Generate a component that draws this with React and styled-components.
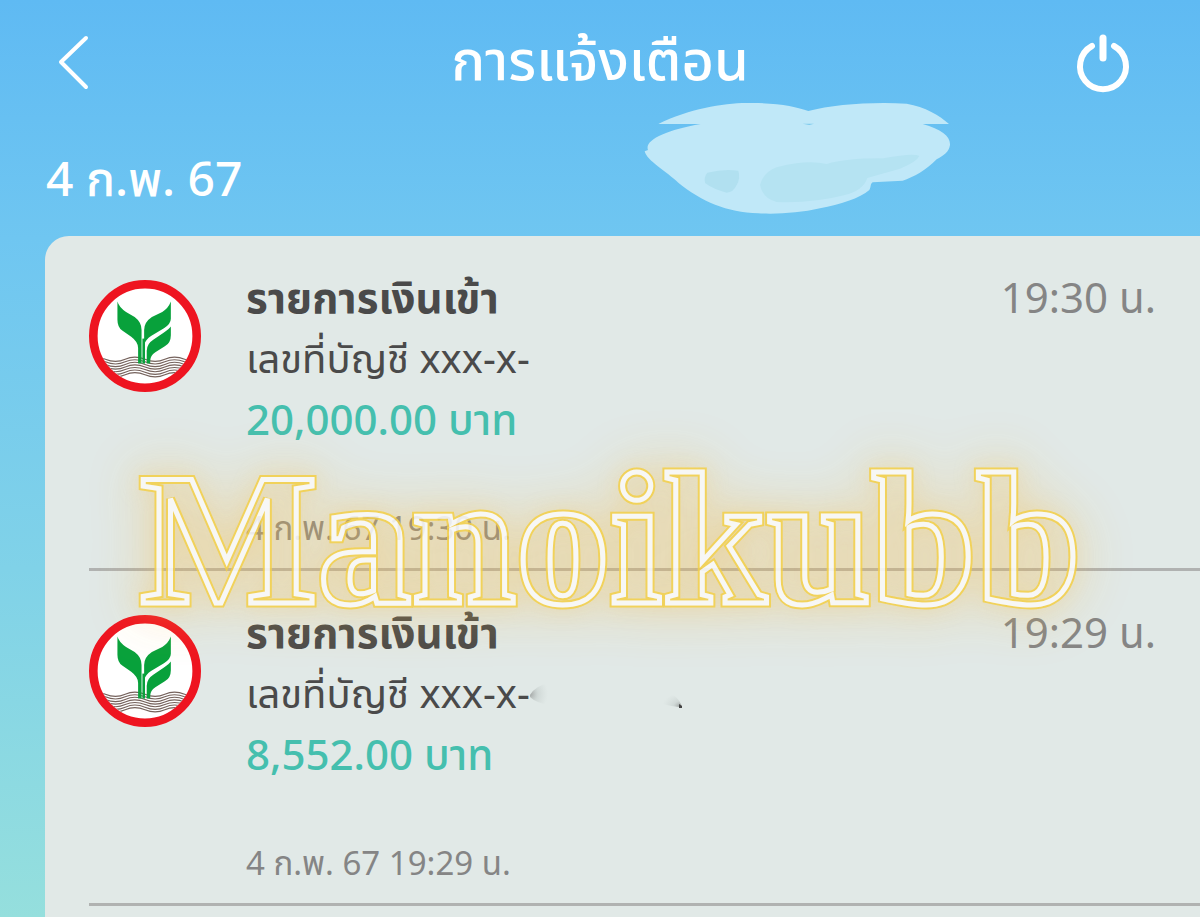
import React from "react";
import styled, { createGlobalStyle } from "styled-components";

const GlobalStyle = createGlobalStyle`
  * {
    box-sizing: border-box;
  }

  body {
    margin: 0;
    font-family: "Noto Sans", "Noto Sans Thai", sans-serif;
  }

  h1, h2, h3, p, ul {
    margin: 0;
    padding: 0;
    font-weight: 400;
  }
`;

const Page = styled.div`
  position: relative;
  display: flex;
  flex-direction: column;
  min-height: 100vh;
  overflow: hidden;
  background: linear-gradient(#5fbaf3, #6fc6f1 26%, #80d2e8 62%, #95dfdd);
`;

const Cloud = styled.svg`
  position: absolute;
  top: 90px;
  left: 630px;
  width: 340px;
  height: 135px;
`;

const Header = styled.header`
  position: relative;
  display: grid;
  grid-template-columns: 1fr auto 1fr;
  align-items: center;
  height: 126px;
  padding: 0 54px;
`;

const Title = styled.h1`
  padding-bottom: 10px;
  color: #fff;
  font-size: 56px;
  font-weight: 500;
  line-height: 80px;
`;

const IconButton = styled.button`
  display: flex;
  justify-self: ${(props) => props.$side};
  padding: 0;
  border: 0;
  background: none;
  color: #fff;
  cursor: pointer;
`;

const DateHeading = styled.h2`
  position: relative;
  padding: 20px 46px 26px;
  color: #fff;
  font-size: 48px;
  font-weight: 500;
  line-height: 64px;
`;

const Card = styled.ul`
  flex: 1;
  margin-left: 45px;
  border-radius: 24px 0 0 0;
  background: #e1e9e7;
  list-style: none;
`;

const Item = styled.li`
  display: grid;
  grid-template-columns: 112px 1fr auto;
  column-gap: 45px;
  height: 335px;
  margin-left: 44px;
  padding: 36px 44px 0 0;
  border-bottom: 3px solid #b0b2b1;
`;

const Logo = styled.svg`
  width: 112px;
  height: 112px;
  margin-top: 8px;
`;

const Name = styled.h3`
  color: #4a4a4a;
  font-size: 42px;
  font-weight: 700;
  line-height: 50px;
`;

const Account = styled.p`
  display: flex;
  color: #4a4a4a;
  font-size: 40px;
  line-height: 72px;
`;

const Smudge = styled.svg`
  width: 160px;
  height: 68px;
`;

const Amount = styled.p`
  margin-bottom: 56px;
  color: #45bfae;
  font-size: 42px;
  font-weight: 500;
  line-height: 50px;
`;

const Stamp = styled.p`
  color: #858585;
  font-size: 33px;
  line-height: 56px;
`;

const Time = styled.p`
  color: #858585;
  font-size: 42px;
  line-height: 50px;
`;

const Watermark = styled.div`
  position: absolute;
  top: 432px;
  left: 140px;
  color: transparent;
  font-family: "Liberation Serif", serif;
  font-size: 188px;
  font-weight: 700;
  line-height: 216px;
  white-space: nowrap;
  pointer-events: none;
  opacity: 0.88;
  -webkit-text-stroke: 9px #f4cf48;
  filter: drop-shadow(0 0 10px rgba(244, 190, 80, 0.25))
    drop-shadow(0 0 28px rgba(244, 184, 70, 0.65));

  &::after {
    content: "Manoikubb";
    position: absolute;
    top: 0;
    left: 0;
    -webkit-text-stroke: 5px #fbfaf8;
  }
`;

const items = [
  {
    name: "รายการเงินเข้า",
    account: "เลขที่บัญชี xxx-x-",
    amount: "20,000.00 บาท",
    stamp: "4 ก.พ. 67 19:30 น.",
    time: "19:30 น.",
  },
  {
    name: "รายการเงินเข้า",
    account: "เลขที่บัญชี xxx-x-",
    amount: "8,552.00 บาท",
    stamp: "4 ก.พ. 67 19:29 น.",
    time: "19:29 น.",
    smudged: true,
  },
];

const waves = [92, 95, 98, 101, 104, 107, 110];

const BankLogo = ({ id }) => (
  <Logo viewBox="0 0 130 130" aria-hidden="true">
    <defs>
      <clipPath id={id}>
        <circle cx="65" cy="65" r="55" />
      </clipPath>
    </defs>
    <circle cx="65" cy="65" r="60" fill="#fff" stroke="#ee1420" strokeWidth="10" />
    <g clipPath={`url(#${id})`} fill="none" stroke="#75625c" strokeWidth="1.3">
      {waves.map((y) => (
        <path
          key={y}
          d={`M-4 ${y} q11 -5 23 0 t23 0 t23 0 t23 0 t23 0 t23 0`}
        />
      ))}
    </g>
    <g fill="#08a13b">
      <path d="M33 25 Q35 32 43 37 L53 43 Q61 49 61 58 V97 H57 V79 Q57 72 49 66 L39 59 Q33 55 33 46 Z" />
      <path d="M95 25 Q92 33 85 37 L73 43 Q64 49 64 58 V75 Q66 69 72 65 L87 56 Q95 51 95 45 Z" />
      <path d="M95 54 V64 Q95 73 88 77 L77 84 Q71 88 71 94 V97 H67 V82 Q67 74 75 69 L87 61 Q93 57 95 54 Z" />
      <path d="M62 68 H65 V97 H62 Z" />
    </g>
  </Logo>
);

const EraserMarks = () => (
  <Smudge viewBox="0 0 160 68" aria-hidden="true">
    <defs>
      <radialGradient id="fadeLeft" cx="0" cy="0.5" r="1">
        <stop offset="0" stopColor="#777" stopOpacity="0.6" />
        <stop offset="0.4" stopColor="#aab3b1" stopOpacity="0.3" />
        <stop offset="0.9" stopColor="#b9c2c0" stopOpacity="0" />
      </radialGradient>
      <radialGradient id="fadeRight" cx="1" cy="1" r="1">
        <stop offset="0" stopColor="#555" stopOpacity="0.7" />
        <stop offset="0.4" stopColor="#aab3b1" stopOpacity="0.3" />
        <stop offset="0.9" stopColor="#b9c2c0" stopOpacity="0" />
      </radialGradient>
    </defs>
    <path d="M0 38 Q6 28 20 26 V48 Q6 46 0 40 Z" fill="url(#fadeLeft)" />
    <path d="M130 34 Q148 36 152 50 Q142 50 130 46 Z" fill="url(#fadeRight)" />
    <path d="M149 47 L152 49 V51 H149 Z" fill="#444" />
  </Smudge>
);

const App = () => {
  return (
    <Page>
      <GlobalStyle />
      <Cloud viewBox="0 0 1020 405" aria-hidden="true">
        <path
          d="M85 102 C180 55 290 37 360 39 C440 38 500 50 535 63 C610 44 720 35 830 41 C885 50 930 77 957 102 H878 C935 118 962 140 960 165 C957 187 940 197 920 208 C890 240 850 262 818 272 L728 277 C720 282 724 290 718 300 C690 325 630 343 570 355 C510 369 440 373 385 370 C290 366 215 335 145 278 C110 245 50 212 44 184 L54 180 C42 150 110 120 212 102 Z"
          fill="#c0e8f8"
        />
        <path
          d="M232 248 Q280 236 325 242 Q332 264 320 285 Q310 307 290 308 Q250 298 226 280 Q220 262 232 248 Z"
          fill="#b1e0f0"
        />
        <path
          d="M390 285 Q400 246 440 232 Q530 208 590 222 Q650 204 760 205 Q850 188 868 198 Q860 216 810 236 L712 264 Q700 302 642 316 Q550 340 440 336 Q398 326 390 285 Z"
          fill="#b5e3f2"
        />
        <path d="M518 101 H552 L538 105 Z" fill="#7cc9ec" />
      </Cloud>
      <Header>
        <IconButton $side="start" aria-label="ย้อนกลับ">
          <svg width="40" height="60" viewBox="0 0 40 60" fill="none">
            <path
              d="M32 5 L7 29 L32 54"
              stroke="currentColor"
              strokeWidth="4"
              strokeLinecap="round"
              strokeLinejoin="round"
            />
          </svg>
        </IconButton>
        <Title>การแจ้งเตือน</Title>
        <IconButton $side="end" aria-label="ออกจากระบบ">
          <svg width="72" height="60" viewBox="0 0 72 60" fill="none">
            <path
              d="M18 13 A23 23 0 1 0 40 13"
              stroke="currentColor"
              strokeWidth="6"
              strokeLinecap="round"
            />
            <path
              d="M29 5 V25"
              stroke="currentColor"
              strokeWidth="7"
              strokeLinecap="round"
            />
          </svg>
        </IconButton>
      </Header>
      <DateHeading>4 ก.พ. 67</DateHeading>
      <Card>
        {items.map((item) => (
          <Item key={item.stamp}>
            <BankLogo id={`seal-${item.amount.length}`} />
            <div>
              <Name>{item.name}</Name>
              <Account>
                {item.account}
                {item.smudged && <EraserMarks />}
              </Account>
              <Amount>{item.amount}</Amount>
              <Stamp>{item.stamp}</Stamp>
            </div>
            <Time>{item.time}</Time>
          </Item>
        ))}
      </Card>
      <Watermark>Manoikubb</Watermark>
    </Page>
  );
};

export default App;
